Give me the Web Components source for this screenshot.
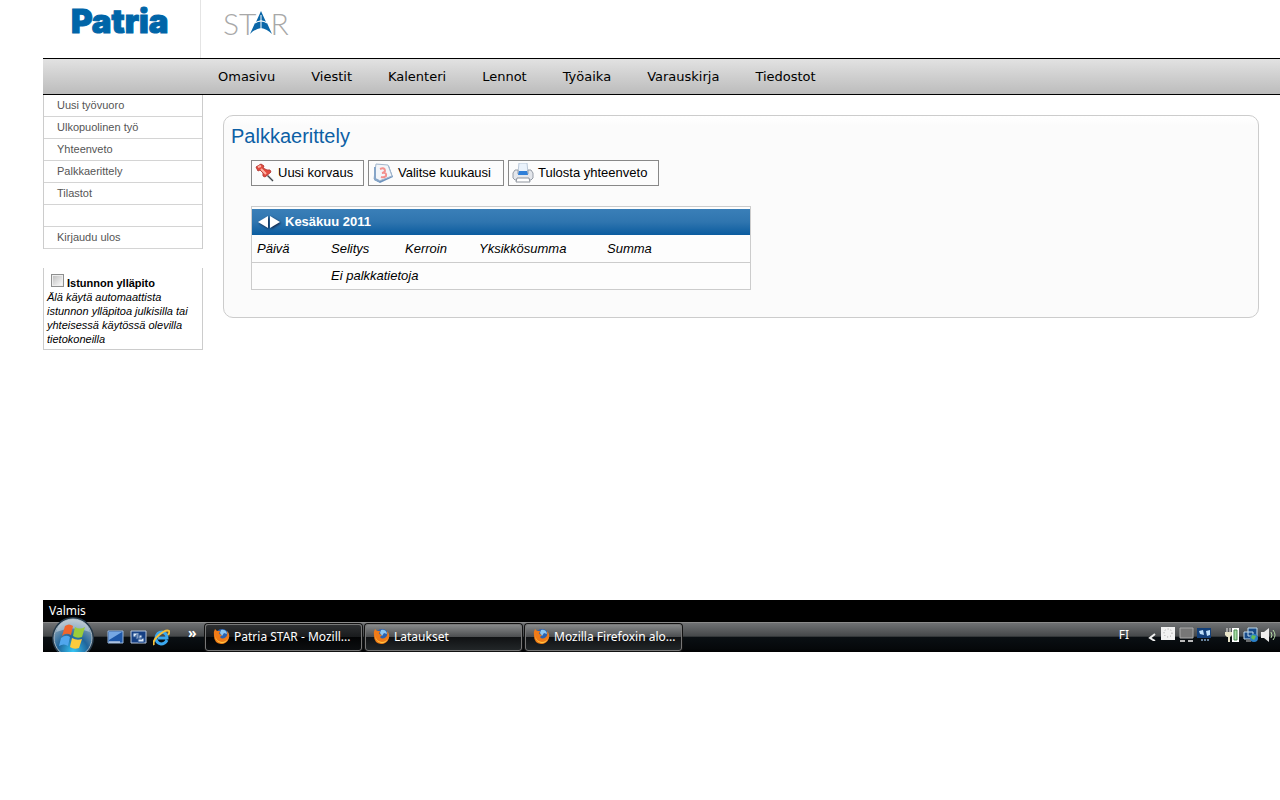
<!DOCTYPE html>
<html lang="fi">
<head>
<meta charset="utf-8">
<title>Patria STAR</title>
<style>
  body { margin: 0; background: #fff; color: #000; font-family: "Liberation Sans", Arial, sans-serif; }
</style>
</head>
<body>
<star-page>
  <star-header slot="header"></star-header>
  <star-nav slot="nav"></star-nav>
  <star-menu slot="side"></star-menu>
  <session-keeper slot="side"></session-keeper>
  <star-panel slot="main" heading="Palkkaerittely">
    <tool-button slot="tools" icon="pin">Uusi korvaus</tool-button>
    <tool-button slot="tools" icon="calendar">Valitse kuukausi</tool-button>
    <tool-button slot="tools" icon="printer">Tulosta yhteenveto</tool-button>
    <pay-table></pay-table>
  </star-panel>
  <desktop-bar slot="footer">
    <task-item active>Patria STAR - Mozill...</task-item>
    <task-item>Lataukset</task-item>
    <task-item>Mozilla Firefoxin alo...</task-item>
  </desktop-bar>
</star-page>

<script>
const define = (name, render) => customElements.define(name, class extends HTMLElement {
  constructor() {
    super();
    this.attachShadow({ mode: 'open' });
  }
  connectedCallback() {
    this.shadowRoot.innerHTML = '<style>:host,*{box-sizing:border-box}</style>' + render(this);
  }
});

define('star-page', () => `
  <style>
    :host { display: block; margin-left: 43px; }
    .body { display: grid; grid-template-columns: 160px minmax(0, 1fr); min-height: 505px; }
    main { padding: 20px 21px 20px 20px; }
  </style>
  <slot name="header"></slot>
  <slot name="nav"></slot>
  <div class="body">
    <aside><slot name="side"></slot></aside>
    <main><slot name="main"></slot></main>
  </div>
  <slot name="footer"></slot>`);

define('star-header', () => `
  <style>
    :host { display: flex; height: 58px; }
    .brand { width: 158px; border-right: 1px solid #e4e4e4; padding-left: 28px; color: #0065a8;
      font: 900 33px/42px Inter, sans-serif; -webkit-text-stroke: 1px #0065a8; }
    .product { display: flex; padding: 8px 0 0 22px; color: #a8a8a8; font: 300 30px/30px Lato, sans-serif; }
    svg { display: block; margin: 3px -2px 0 -6px; }
  </style>
  <div class="brand">Patria</div>
  <div class="product" aria-label="STAR"><span>ST</span>
    <svg width="22" height="24" viewBox="0 0 22 24" aria-hidden="true">
      <path d="M11 0L16 11Q11 8 6 11Z M5 12Q11 8 17 12L22 23Q17 18 11 17Q5 18 0 23Z" fill="#0b67a8"/>
      <path d="M11 4V17M5 12Q11 8 17 12" fill="none" stroke="#fff"/>
    </svg><span>R</span></div>`);

define('star-nav', () => `
  <style>
    :host { display: block; }
    nav { display: flex; gap: 36px; height: 37px; padding-left: 175px; border: solid #000; border-width: 1px 0;
      background: linear-gradient(#e2e2e2, #bcbcbc); }
    a { font: 13px/35px "DejaVu Sans", Verdana, sans-serif; color: #000; text-decoration: none; }
  </style>
  <nav>${['Omasivu', 'Viestit', 'Kalenteri', 'Lennot', 'Työaika', 'Varauskirja', 'Tiedostot']
    .map(t => `<a href="#">${t}</a>`).join('')}</nav>`);

define('star-menu', () => `
  <style>
    :host { display: block; margin-bottom: 19px; }
    ul { margin: 0; padding: 0; list-style: none; border: solid #ccc; border-width: 0 1px; }
    li { height: 22px; border-bottom: 1px solid #d4d4d4; padding-left: 13px; }
    a { font: 11px/21px "Liberation Sans", Arial, sans-serif; display: block; color: #555; text-decoration: none; }
  </style>
  <ul>${['Uusi työvuoro', 'Ulkopuolinen työ', 'Yhteenveto', 'Palkkaerittely', 'Tilastot', '', 'Kirjaudu ulos']
    .map(t => `<li>${t && `<a href="#">${t}</a>`}</li>`).join('')}</ul>`);

define('session-keeper', () => `
  <style>
    :host { display: block; border: solid #ccc; border-width: 0 1px 1px; padding: 6px 3px 3px;
      font: 11px/14px "Liberation Sans", Arial, sans-serif; }
    label { display: flex; align-items: flex-end; gap: 3px; height: 16px; padding-left: 4px; font-weight: bold; }
    input { appearance: none; width: 13px; height: 13px; margin: 0 0 3px; border: 1px solid #8e8f8f;
      background: linear-gradient(135deg, #bbb, #fff); box-shadow: inset 0 0 0 1px #eee; }
    p { margin: 0; font-style: italic; }
  </style>
  <label><input type="checkbox">Istunnon ylläpito</label>
  <p>Älä käytä automaattista istunnon ylläpitoa julkisilla tai yhteisessä käytössä olevilla tietokoneilla</p>`);

define('star-panel', el => `
  <style>
    :host { display: block; border: 1px solid #ccc; border-radius: 10px; background: linear-gradient(#fff, #fbfbfb 10px);
      padding: 8px 7px 27px; }
    h1 { margin: 0; color: #0c5fa5; font: 20px/24px "Liberation Sans", Arial, sans-serif; }
    .inner { padding: 12px 20px 0; }
    .tools { display: grid; grid-template-columns: 113px 136px 151px; gap: 4px; margin-bottom: 20px; }
  </style>
  <h1>${el.getAttribute('heading')}</h1>
  <div class="inner">
    <div class="tools"><slot name="tools"></slot></div>
    <slot></slot>
  </div>`);

const icons = {
  pin: [19, `<path d="M11 11L18 18" stroke="#8a9299" stroke-width="2"/><path d="M13 13L18 18" stroke="#444"/>
    <path d="M1 4L6 1L9 3L8 5L12 7L15 7L16 9L10 14L8 13L8 10L5 7L3 8Z" fill="#e34a3e" stroke="#b8403a"/>
    <path d="M3 4L6 3M6 6L11 11" stroke="#ffb3a5" stroke-width="2"/>`],
  calendar: [22, `<path d="M5 1L17 3L21 14L8 20L2 17Z" fill="#6d93bd"/>
    <path d="M4 1L16 2L20 13L7 18L2 16Z" fill="#f2f5f9" stroke="#a3b6cc"/><path d="M3 4V16L7 18" fill="none" stroke="#86a5c8" stroke-width="2"/>
    <path d="M8 6Q13 4 13 8Q12 10 10 10Q15 9 14 13Q12 15 9 14" fill="none" stroke="#f3918e" stroke-width="2"/>`],
  printer: [22, `<path d="M7 0H15L16 10H6Z" fill="#eaf2fb" stroke="#b9c7d8"/>
    <path d="M3 7H6V11H16V7H19L21 10V15L19 17H3L1 15V10Z" fill="#e3e6eb" stroke="#949ba6"/>
    <path d="M7 8H15L16 12H6Z" fill="#2f7fd8"/><path d="M5 15H17L18 19H4Z" fill="#fff" stroke="#8d939c"/>`]
};

define('tool-button', el => {
  const [width, shapes] = icons[el.getAttribute('icon')];
  return `
  <style>
    :host { display: block; }
    button { display: flex; align-items: center; gap: 4px; width: 100%; height: 26px; padding: 0 0 0 3px; margin: 0;
      border: 1px solid #888; border-radius: 0; background: #fcfcfc; color: #000;
      font: 13px/24px "Liberation Sans", Arial, sans-serif; white-space: nowrap; }
    svg { flex: none; }
  </style>
  <button type="button"><svg width="${width}" height="20" viewBox="0 0 ${width} 20" fill="none" aria-hidden="true">${shapes}</svg><span><slot></slot></span></button>`;
});

define('pay-table', () => `
  <style>
    :host { display: block; max-width: 500px; border: 1px solid #ccc; padding-top: 2px; background: #fdfdfd;
      font: 13px/26px "Liberation Sans", Arial, sans-serif; }
    table { width: 100%; border-collapse: separate; border-spacing: 0; table-layout: fixed; }
    th, td { height: 27px; padding: 0 0 0 5px; text-align: left; font-weight: normal; font-style: italic; }
    .narrow { width: 74px; } .wide { width: 128px; }
    .month th { height: 26px; background: linear-gradient(#3a7fb8, #2f75af 50%, #0b5c9f); color: #fff; font-weight: bold; font-style: normal; }
    .period { display: flex; align-items: center; }
    .period span { margin-left: 4px; }
    button { border: 0; padding: 0; margin: 0; background: none; display: block; height: 18px; }
    svg { display: block; filter: drop-shadow(1px 1px 1px #124); }
    tbody td { border-top: 1px solid #ccc; }
  </style>
  <table>
    <colgroup><col class="narrow"><col class="narrow"><col class="narrow"><col class="wide"><col></colgroup>
    <thead>
      <tr class="month"><th colspan="5"><div class="period">
        <button type="button" aria-label="Edellinen kuukausi"><svg width="12" height="13" viewBox="0 0 12 13"><path d="M11 0V12L1 6Z" fill="#fff"/></svg></button>
        <button type="button" aria-label="Seuraava kuukausi"><svg width="12" height="13" viewBox="0 0 12 13"><path d="M1 0V12L11 6Z" fill="#fff"/></svg></button>
        <span>Kesäkuu 2011</span></div></th></tr>
      <tr><th>Päivä</th><th>Selitys</th><th>Kerroin</th><th>Yksikkösumma</th><th>Summa</th></tr>
    </thead>
    <tbody><tr><td></td><td colspan="4">Ei palkkatietoja</td></tr></tbody>
  </table>`);

define('task-item', el => `
  <style>
    :host { display: block; width: 157px; }
    button { display: flex; align-items: center; gap: 4px; width: 100%; height: 27px; margin: 0; padding: 0 7px 2px;
      border: 1px solid #777; border-radius: 3px; color: #fff; text-align: left; white-space: nowrap;
      background: ${el.hasAttribute('active') ? 'linear-gradient(#2d2f31, #181a1c 49%, #030405 50%, #0c0e10)' : 'linear-gradient(#868889, #4a4c4e 49%, #101214 50%, #222628)'};
      font: 12px/24px "Noto Sans", "Segoe UI", sans-serif; box-shadow: 0 0 0 1px #111; }
    svg { flex: none; }
  </style>
  <button type="button"><svg width="17" height="17" viewBox="0 0 17 17" aria-hidden="true">
    <circle cx="9" cy="8" r="7" fill="#2c62b0"/><path d="M8 2Q13 1 14 6L11 5L9 8L7 5Z" fill="#8fc7f0"/>
    <path d="M2 1L4 3L7 3L6 6L9 7L7 9Q9 12 13 9Q15 7 14 3Q17 6 16 10Q14 16 8 16Q1 15 1 8Q0 4 2 1Z" fill="#f07a16"/>
    <path d="M2 6Q2 13 9 14Q13 14 15 10Q13 16 8 15Q2 14 2 6Z" fill="#ffc540"/></svg><span><slot></slot></span></button>`);

define('desktop-bar', () => `
  <style>
    :host { display: block; position: relative; overflow: hidden; color: #fff; background: #000;
      font: 12px/22px "Noto Sans", "Segoe UI", sans-serif; }
    .status { height: 22px; padding-left: 6px; }
    .bar { display: flex; align-items: center; height: 30px; padding-right: 3px; border-top: 1px solid #8b8b8b;
      background: linear-gradient(#6f7173, #45484a 45%, #0a0f13 50%, #05080a 90%, #000); }
    .orb { position: absolute; left: 8px; top: 16px; padding: 0; border: 0; background: none; }
    .quick { display: flex; align-items: center; gap: 6px; padding-left: 64px; width: 162px; }
    .more { margin-left: 12px; font-size: 14px; font-weight: bold; align-self: flex-start; line-height: 8px; }
    .tasks { display: flex; gap: 3px; flex: 1; align-self: flex-start; padding-top: 1px; }
    .tray { display: flex; align-items: center; gap: 2px; padding-bottom: 5px; }
    .lang { margin-right: 16px; }
    .gap { margin-left: 10px; }
    svg { display: block; }
  </style>
  <div class="status">Valmis</div>
  <div class="bar">
    <div class="quick">
      <svg width="17" height="15" viewBox="0 0 17 15"><path d="M1 1H16V13H1Z" fill="#1d57a8" stroke="#9bb9dc"/><path d="M2 2H15L2 10Z" fill="#76a7e3"/><path d="M2 12H13" stroke="#fff"/></svg>
      <svg width="17" height="15" viewBox="0 0 17 15"><path d="M1 1H16V13H1Z" fill="#153f83" stroke="#b5c5dc"/><path d="M3 3H9V7H3ZM6 5H12V9H6ZM8 8H14V12H8Z" fill="#dce9f8" stroke="#244f8d"/></svg>
      <svg width="17" height="17" viewBox="0 0 17 17"><path d="M14 11Q12 15 8 15Q3 14 3 9Q4 3 9 3Q14 4 14 9H5" fill="none" stroke="#3ba8ef" stroke-width="3"/><path d="M1 16Q-1 12 6 6Q13 0 16 2Q17 3 15 6" fill="none" stroke="#f6c13b" stroke-width="2"/></svg>
      <span class="more">»</span>
    </div>
    <div class="tasks"><slot></slot></div>
    <div class="tray">
      <span class="lang">FI</span>
      <svg width="12" height="12" viewBox="0 0 12 12"><path d="M8 5L3 9L8 12" fill="none" stroke="#eee" stroke-width="2"/></svg>
      <svg width="16" height="16" viewBox="0 0 16 16"><path d="M0 0H14V13H0Z" fill="#f2f2f2"/><circle cx="7" cy="6" r="4" fill="none" stroke="#999" stroke-dasharray="1 2"/></svg>
      <svg width="16" height="16" viewBox="0 0 16 16"><path d="M1 1H14V11H1Z" fill="#777" stroke="#aaa"/><path d="M1 14H6M9 14H14" stroke="#bbb" stroke-width="2"/></svg>
      <svg width="16" height="16" viewBox="0 0 16 16"><path d="M0 1H14V11H0Z" fill="#123f79"/><path d="M2 4L6 3L7 8L3 7ZM9 4L13 3L13 8L10 9Z" fill="#bfe0fa"/><path d="M4 13H12" stroke="#68829b" stroke-width="2" stroke-dasharray="2 1"/></svg>
      <svg class="gap" width="16" height="16" viewBox="0 0 16 16"><path d="M8 2H13V14H8Z" fill="#b8ebb5" stroke="#fff" stroke-width="2"/><path d="M9 3H12V13H9Z" fill="#a8dfa5" stroke="#4c8c50"/><path d="M2 1V5M5 1V5" stroke="#eee"/><path d="M0 5H7V8L5 10H2L0 8Z" fill="#e8e4c8"/><path d="M4 9V15" stroke="#e8e4c8" stroke-width="2"/></svg>
      <svg width="16" height="16" viewBox="0 0 16 16"><path d="M5 1H14V9H5ZM1 5H10V12H1Z" fill="#174b89" stroke="#c1dced"/><path d="M3 14H8" stroke="#ccc"/><circle cx="11" cy="11" r="4" fill="#2b80c7"/><path d="M9 8L13 9L11 13L8 11Z" fill="#65bd56"/></svg>
      <svg width="16" height="16" viewBox="0 0 16 16"><path d="M0 5H3L8 1V15L3 11H0Z" fill="#eee"/><path d="M10 5Q12 8 10 11M12 3Q16 8 12 13" fill="none" stroke="#b5dda9"/></svg>
    </div>
  </div>
  <button class="orb" type="button" aria-label="Käynnistä"><svg width="44" height="44" viewBox="0 0 44 44">
    <defs><radialGradient id="g" cx=".5" cy=".85" r=".8"><stop stop-color="#35c5f4"/><stop offset=".5" stop-color="#20659b"/><stop offset="1" stop-color="#94a9b8"/></radialGradient></defs>
    <circle cx="22" cy="22" r="21" fill="#253949"/><circle cx="22" cy="22" r="19" fill="url(#g)" stroke="#a7bac8"/>
    <path d="M5 16Q8 4 22 3Q36 4 39 16Q22 9 5 16Z" fill="#fff" opacity=".35"/>
    <path d="M14 10Q18 7 22 10L20 19Q15 16 11 20Z" fill="#f0652c"/><path d="M24 11Q29 14 34 11L31 21Q26 23 22 20Z" fill="#9bcc3a"/>
    <path d="M10 22Q15 18 19 21L17 30Q13 27 8 30Z" fill="#50a6ed"/><path d="M21 22Q26 25 31 23L28 32Q23 34 19 31Z" fill="#fccb3c"/></svg></button>`);
</script>
</body>
</html>
